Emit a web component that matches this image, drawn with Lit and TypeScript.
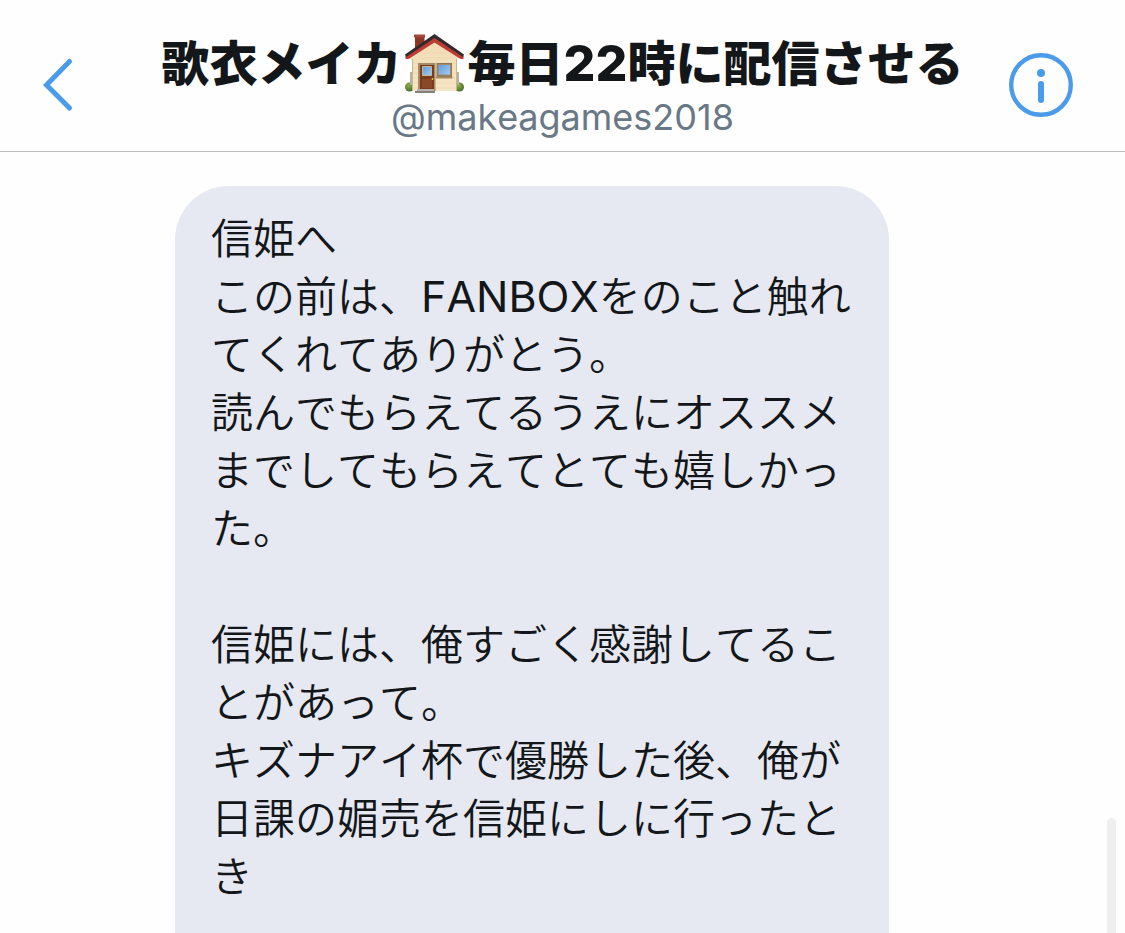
import { LitElement, html, css, svg } from "lit";
import { customElement, property } from "lit/decorators.js";

const house = svg`
  <defs>
    <linearGradient id="wall" x1="0" y1="0" x2="0" y2="1">
      <stop offset="0" stop-color="#f0dcb4" />
      <stop offset="1" stop-color="#f6e6c6" />
    </linearGradient>
    <linearGradient id="pane" x1="0" y1="0" x2="1" y2="1">
      <stop offset="0" stop-color="#5b9bdc" />
      <stop offset="1" stop-color="#a5cdf3" />
    </linearGradient>
    <radialGradient id="bush" cx="0.4" cy="0.35" r="0.7">
      <stop offset="0" stop-color="#8db04e" />
      <stop offset="1" stop-color="#3f6a22" />
    </radialGradient>
  </defs>
  <path d="M10 1h9.500v12l-9.500 9z" fill="#8d3527" />
  <path d="M9 0.500h11v3H9z" fill="#a5483a" />
  <circle cx="4.500" cy="53" r="4.500" fill="url(#bush)" />
  <circle cx="54.500" cy="53" r="4.500" fill="url(#bush)" />
  <path d="M4 24L29.500 5L54 24l-2 2v31H7V26z" fill="url(#wall)" />
  <path d="M7 57V25h1v32z M51 25h1v32h-1z" fill="#cdb58a" />
  <path d="M18 19h24M13 24h34M8 29h43M8 34h43M8 39h43M8 44h43M8 49h43M8 54h43" stroke="#e9d4a8" stroke-width="0.600" />
  <path d="M5 38h2v13H5zM52 38h2v13h-2z" fill="#b9b1a2" />
  <path d="M29.500 3L0.500 22v3H3.500L29.500 8.500L55.500 25h3v-3z" fill="#be3b34" />
  <path d="M29.500 0L0 20.500l1 2.500L29.500 4l28.500 19 1-2.500z" fill="#302a2b" />
  <path d="M13 29h17.500v28H13z" fill="#a68c66" />
  <path d="M15 31h14v25H15z" fill="#7b3a1c" />
  <path d="M17.500 32.500h9v9h-9z" fill="url(#pane)" stroke="#c8b698" />
  <path d="M17 45h10v9H17z" fill="#8a4826" />
  <circle cx="27.500" cy="45" r="1" fill="#e0bd60" />
  <path d="M31.500 29H47v14.500H31.500z" fill="#8b7656" />
  <path d="M33 30.500h12.500V41H33z" fill="url(#pane)" stroke="#a48a64" />
  <path d="M31 42.500h16.500v2H31z" fill="#a58b64" />
  <path d="M12 55h17v2H12z" fill="#b5b2ac" />
  <path d="M10 57h20v2H10z" fill="#85827d" />
`;

/** Wraps runs of Latin letters and digits so they can be sized beside kana and kanji. */
const mixed = (text: string) =>
  text
    .split(/([A-Za-z0-9]+)/)
    .map((part, i) => (i % 2 ? html`<span class="latin">${part}</span>` : part));

@customElement("chat-header")
class ChatHeader extends LitElement {
  @property() handle = "";

  static styles = css`
    :host {
      display: block;
      flex: none;
    }
    .bar {
      display: grid;
      grid-template-columns: 116px minmax(0, 1fr) 116px;
      align-items: start;
      box-sizing: border-box;
      padding: 34px 0 10px;
      border-bottom: 1px solid #bcbec1;
    }
    .action {
      display: flex;
      align-items: center;
      justify-content: center;
      height: 102px;
      margin: 0;
      padding: 0;
      border: 0;
      background: none;
      color: #4a9bea;
      text-decoration: none;
      cursor: pointer;
    }
    .action:focus-visible {
      outline: 2px solid #4a9bea;
    }
    .info {
      justify-content: flex-start;
    }
    .titles {
      text-align: center;
      white-space: nowrap;
    }
    .name {
      display: flex;
      align-items: center;
      justify-content: center;
      height: 60px;
      margin: 0;
      color: #14171a;
      font-size: 48px;
      font-weight: 800;
      line-height: 60px;
    }
    .latin {
      font-size: 50px;
      line-height: 1;
    }
    .emoji {
      width: 60px;
      height: 60px;
      margin: 0 3px;
      flex: none;
    }
    .handle {
      margin: 0;
      color: #697886;
      font-size: 36px;
      line-height: 47px;
    }
  `;

  render() {
    return html`
      <header class="bar">
        <a class="action" href="#" aria-label="戻る">
          <svg width="34" height="56" viewBox="0 0 34 56" fill="none" stroke="currentColor" stroke-width="5" stroke-linecap="round" stroke-linejoin="miter">
            <path d="M28.500 4.500L5.500 28L28.500 51" />
          </svg>
        </a>
        <div class="titles">
          <h1 class="name">
            <span>歌衣メイカ</span><svg class="emoji" viewBox="0 0 60 60" role="img" aria-label="家">${house}</svg><span>${mixed("毎日22時に配信させる")}</span>
          </h1>
          <p class="handle">${this.handle}</p>
        </div>
        <button class="action info" type="button" aria-label="会話の情報">
          <svg width="64" height="64" viewBox="0 0 64 64">
            <circle cx="32" cy="32" r="29.800" fill="none" stroke="currentColor" stroke-width="4.400" />
            <circle cx="32" cy="20" r="4" fill="currentColor" />
            <path d="M32 31v16" stroke="currentColor" stroke-width="6" stroke-linecap="round" />
          </svg>
        </button>
      </header>
    `;
  }
}

@customElement("message-bubble")
class MessageBubble extends LitElement {
  @property() text = "";

  static styles = css`
    :host {
      display: block;
    }
    .bubble {
      box-sizing: border-box;
      min-height: 100%;
      margin: 0;
      padding: 24px 36px;
      border-radius: 54px 54px 0 0;
      background: #e6e9f2;
      color: #14171a;
      font-size: 42px;
      font-weight: 350;
      line-height: 58px;
      white-space: pre-wrap;
    }
    .latin {
      font-size: 43px;
      font-weight: 400;
      line-height: 1;
    }
  `;

  render() {
    return html`<p class="bubble">${mixed(this.text)}</p>`;
  }
}

const message = [
  "信姫へ",
  "この前は、FANBOXをのこと触れてくれてありがとう。",
  "読んでもらえてるうえにオススメまでしてもらえてとても嬉しかった。",
  "",
  "信姫には、俺すごく感謝してることがあって。",
  "キズナアイ杯で優勝した後、俺が日課の媚売を信姫にしに行ったとき",
].join("\n");

@customElement("app-root")
class AppRoot extends LitElement {
  static styles = css`
    :host {
      display: flex;
      flex-direction: column;
      height: 100vh;
      overflow: hidden;
      background: #fefefe;
      font-family: Inter, "Noto Sans CJK JP", sans-serif;
      font-kerning: none;
    }
    .thread {
      position: relative;
      display: grid;
      flex: 1;
      min-height: 0;
      box-sizing: border-box;
      padding: 34px 21% 0 175px;
    }
    .thumb {
      position: absolute;
      right: 9px;
      bottom: 0;
      width: 9px;
      height: 115px;
      border-radius: 5px 5px 0 0;
      background: #efefef;
    }
  `;

  render() {
    return html`
      <chat-header handle="@makeagames2018"></chat-header>
      <main class="thread" lang="ja">
        <message-bubble .text=${message}></message-bubble>
        <div class="thumb"></div>
      </main>
    `;
  }
}
